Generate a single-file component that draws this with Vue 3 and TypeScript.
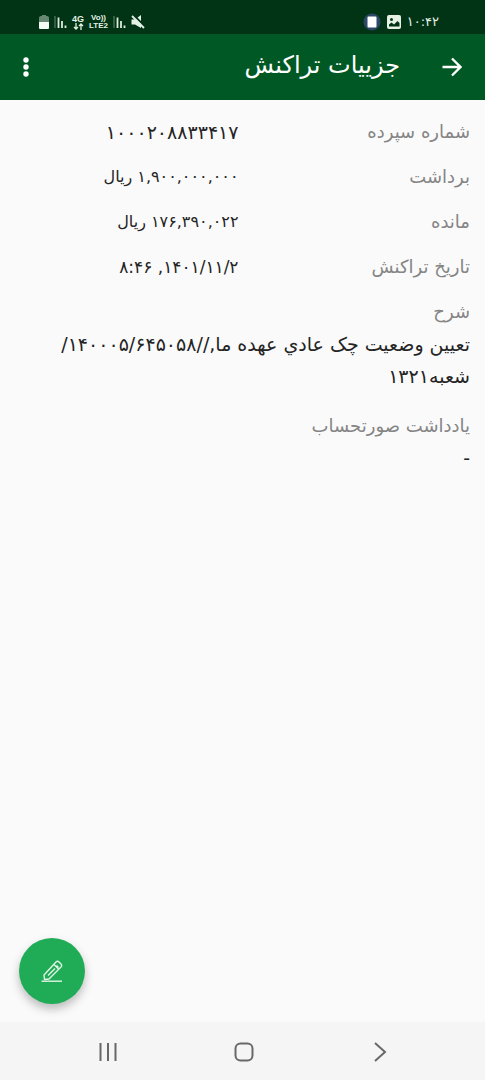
<script setup lang="ts">
interface Detail {
  label: string
  value: string
  kind?: 'number' | 'amount' | 'date'
}

const details: Detail[] = [
  { label: 'شماره سپرده', value: '۱۰۰۰۲۰۸۸۳۳۴۱۷', kind: 'number' },
  { label: 'برداشت', value: '۱,۹۰۰,۰۰۰,۰۰۰ ریال', kind: 'amount' },
  { label: 'مانده', value: '۱۷۶,۳۹۰,۰۲۲ ریال', kind: 'amount' },
  { label: 'تاریخ تراکنش', value: '۱۴۰۱/۱۱/۲, ۸:۴۶', kind: 'date' },
]

const notes: Detail[] = [
  { label: 'شرح', value: 'تعیین وضعیت چک عادي عهده ما,//۱۴۰۰۰۵/۶۴۵۰۵۸/ شعبه۱۳۲۱' },
  { label: 'یادداشت صورتحساب', value: '-' },
]
</script>

<template>
  <div class="screen" dir="rtl">
    <div class="status">
      <div class="group">
        <span class="clock">۱۰:۴۲</span>
        <svg width="14" height="14" viewBox="0 0 14 14" aria-hidden="true">
          <rect width="14" height="14" rx="2" fill="#e6f1e6" />
          <circle cx="4.5" cy="4.5" r="1.5" fill="#003415" />
          <path d="M2 11.5V9.5L4.5 7.5 7 9.5 10.5 6 12.5 8v3.500z" fill="#003415" />
        </svg>
        <svg width="18" height="18" viewBox="0 0 18 18" aria-hidden="true">
          <circle cx="9" cy="9" r="8.500" fill="#2d4767" />
          <rect x="4.500" y="3.500" width="9" height="11" rx="1" fill="#fff" />
        </svg>
      </div>
      <div class="group signals">
        <svg width="14" height="14" viewBox="0 0 14 14" aria-hidden="true">
          <path d="M0.500 4.500H4L10 0v13L4 9.500H0.500z" fill="#e6f1e6" />
          <path d="M2.500 0L14 11.500" stroke="#003415" stroke-width="2" />
          <path d="M1 1L13 13" stroke="#e6f1e6" stroke-width="1.800" />
        </svg>
        <svg width="13" height="14" viewBox="0 0 13 14" aria-hidden="true">
          <path d="M1 1v12" stroke="#668873" />
          <path d="M4.500 2.500V13M8 6v7M11.500 10.500V13" stroke="#dcebdc" stroke-width="1.800" />
        </svg>
        <span class="net wide"><span>Vo))</span><span>LTE2</span></span>
        <span class="net">
          <span>4G</span>
          <svg width="11" height="7" viewBox="0 0 11 7" aria-hidden="true">
            <path d="M3 0v6M1 4l2 2 2-2M8 7V1M6 3l2-2 2 2" fill="none" stroke="#e6f1e6" stroke-width="1.300" />
          </svg>
        </span>
        <svg width="13" height="14" viewBox="0 0 13 14" aria-hidden="true">
          <path d="M1 1v12" stroke="#668873" />
          <path d="M4.500 2.500V13M8 6v7M11.500 10.500V13" stroke="#dcebdc" stroke-width="1.800" />
        </svg>
        <svg width="10" height="16" viewBox="0 0 10 16" aria-hidden="true">
          <path d="M0 8V4q0-2 2-2h1V1h4v1h1q2 0 2 2v4z" fill="#668873" />
          <path d="M0 8h10v6q0 1-1 1H1q-1 0-1-1z" fill="#f4faf4" />
        </svg>
      </div>
    </div>

    <header class="bar">
      <button class="icon" type="button" aria-label="بازگشت">
        <svg width="20" height="20" viewBox="0 0 20 20">
          <path d="M0.500 10H18M10 1.500L18.500 10 10 18.500" fill="none" stroke="#fff" stroke-width="2.400" />
        </svg>
      </button>
      <h1>جزییات تراکنش</h1>
      <button class="icon more" type="button" aria-label="گزینه‌ها">
        <svg width="6" height="20" viewBox="0 0 6 20" fill="#fff">
          <circle cx="3" cy="3" r="2.700" />
          <circle cx="3" cy="10" r="2.700" />
          <circle cx="3" cy="17" r="2.700" />
        </svg>
      </button>
    </header>

    <main>
      <dl class="rows">
        <div v-for="d in details" :key="d.label" class="row">
          <dt>{{ d.label }}</dt>
          <dd :class="d.kind">{{ d.value }}</dd>
        </div>
      </dl>
      <dl class="notes">
        <div v-for="n in notes" :key="n.label" class="note">
          <dt>{{ n.label }}</dt>
          <dd>{{ n.value }}</dd>
        </div>
      </dl>
    </main>

    <div class="actions">
      <button class="fab" type="button" aria-label="ویرایش یادداشت">
        <svg width="22" height="22" viewBox="0 0 22 22" fill="none" stroke="#dff5e5" stroke-width="1.400" stroke-linejoin="round">
          <path d="M3.500 19.500L3 15 15 2q1.500-1.500 3 0l2 2q1.300 1.400 0 3L8 19z" />
          <path d="M13 4.500L17.500 9M15.500 5.500l2 2M7 15.500L14 8.500" />
          <path d="M0.500 21.200H21" />
        </svg>
      </button>
    </div>

    <nav class="nav" aria-label="ناوبری">
      <button type="button" aria-label="قبلی">
        <svg width="22" height="22" viewBox="0 0 22 22"><path d="M6 2l10 9-10 9" /></svg>
      </button>
      <button type="button" aria-label="خانه">
        <svg width="22" height="22" viewBox="0 0 22 22"><rect x="2.500" y="2.500" width="17" height="17" rx="5" /></svg>
      </button>
      <button type="button" aria-label="برنامه‌های اخیر">
        <svg width="22" height="22" viewBox="0 0 22 22"><path d="M3.500 2v18M11 2v18M18.500 2v18" /></svg>
      </button>
    </nav>
  </div>
</template>

<style>
body {
  margin: 0;
  background: #fafafa;
}
</style>

<style scoped>
.screen {
  display: flex;
  flex-direction: column;
  min-height: 100vh;
  background: #fafafa;
  color: #242424;
  font-family: "DejaVu Sans", sans-serif;
  font-size: 18px;
  line-height: 32px;
}
button {
  display: flex;
  align-items: center;
  justify-content: center;
  padding: 0;
  border: 0;
  background: none;
  cursor: pointer;
}
.status {
  display: flex;
  justify-content: space-between;
  align-items: center;
  height: 34px;
  padding: 10px 46px 0 39px;
  box-sizing: border-box;
  background: #003415;
  color: #e6f1e6;
}
.group {
  display: flex;
  align-items: center;
  gap: 6px;
}
.signals {
  gap: 5px;
}
.clock {
  font-size: 13px;
  line-height: 20px;
}
.net {
  display: flex;
  flex-direction: column;
  align-items: center;
  font-family: "Liberation Sans", sans-serif;
  font-weight: bold;
  font-size: 9px;
  line-height: 8px;
  direction: ltr;
}
.wide {
  font-size: 8px;
}
.bar {
  display: flex;
  align-items: center;
  height: 66px;
  padding: 0 15px 0 8px;
  background: #005924;
  color: #fff;
}
.icon {
  width: 36px;
  height: 48px;
}
h1 {
  flex: 1;
  margin: 0 34px 0 0;
  padding-bottom: 4px;
  font-size: 24px;
  font-weight: normal;
  line-height: 40px;
}
main {
  flex: 1;
  padding: 10px 15px;
}
dl,
dd {
  margin: 0;
}
dt {
  color: #858585;
}
dd {
  font-size: 19px;
}
.amount {
  font-size: 16px;
}
.date {
  font-size: 17px;
}
.rows {
  display: grid;
}
.row {
  display: grid;
  grid-template-columns: 1fr 1fr;
  gap: 8px;
  padding: 6px 0 7px;
}
.notes {
  display: grid;
  gap: 18px;
  padding-top: 6px;
}
.actions {
  display: flex;
  justify-content: flex-end;
  padding: 0 19px 18px;
}
.fab {
  width: 66px;
  height: 66px;
  border-radius: 50%;
  background: #20ac57;
  box-shadow: 0 5px 10px rgba(0, 0, 0, 0.25);
}
.nav {
  display: flex;
  justify-content: center;
  align-items: center;
  gap: 114px;
  height: 56px;
  padding: 2px 0 0 2px;
  background: #f5f5f5;
}
.nav svg {
  fill: none;
  stroke: #686868;
  stroke-width: 2;
}
</style>
